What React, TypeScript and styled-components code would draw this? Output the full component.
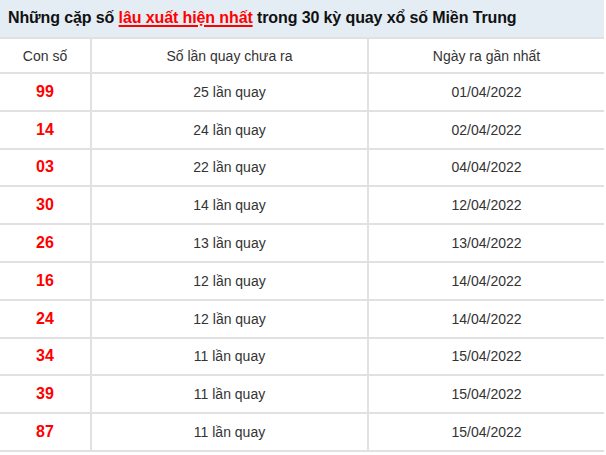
import React from "react";
import styled, { createGlobalStyle } from "styled-components";

const Global = createGlobalStyle`
  html, body { margin: 0; padding: 0; background: #fff; }
  body { font-family: "Liberation Sans", Arial, sans-serif; }
`;

const Wrap = styled.div`
  width: 604px;
`;

const TitleBar = styled.div`
  height: 37px;
  box-sizing: border-box;
  padding: 0 8px;
  background: #e4edf4;
  font-size: 16px;
  font-weight: bold;
  color: #111;
  line-height: 35px;
  letter-spacing: -0.11px;
  white-space: nowrap;
`;

const RedLink = styled.a`
  color: #ff0000;
  text-decoration: underline;
  text-decoration-thickness: 2px;
  text-underline-offset: 2px;
`;

const Table = styled.table`
  width: 604px;
  border-collapse: collapse;
  table-layout: fixed;
  border-top: 2px solid #e1e1e1;
`;

const Row = styled.tr<{ $head?: boolean }>`
  height: ${(p) => (p.$head ? "35px" : "37.8px")};
  border-bottom: 2px solid #e1e1e1;
`;

const Cell = styled.td<{ $w?: string }>`
  padding: 0;
  text-align: center;
  vertical-align: middle;
  font-size: 14px;
  color: #333;
  width: ${(p) => p.$w ?? "auto"};
  & + & {
    border-left: 2px solid #e1e1e1;
  }
`;

const Num = styled(Cell)`
  font-size: 16px;
  font-weight: bold;
  color: #ff0000;
`;

const rows: [string, number, string][] = [
  ["99", 25, "01/04/2022"],
  ["14", 24, "02/04/2022"],
  ["03", 22, "04/04/2022"],
  ["30", 14, "12/04/2022"],
  ["26", 13, "13/04/2022"],
  ["16", 12, "14/04/2022"],
  ["24", 12, "14/04/2022"],
  ["34", 11, "15/04/2022"],
  ["39", 11, "15/04/2022"],
  ["87", 11, "15/04/2022"],
];

export default function App() {
  return (
    <Wrap>
      <Global />
      <TitleBar>
        Những cặp số <RedLink>lâu xuất hiện nhất</RedLink> trong 30 kỳ quay xổ số Miền Trung
      </TitleBar>
      <Table>
        <tbody>
          <Row $head>
            <Cell $w="90px">Con số</Cell>
            <Cell $w="275px">Số lần quay chưa ra</Cell>
            <Cell>Ngày ra gần nhất</Cell>
          </Row>
          {rows.map(([n, c, d], i) => (
            <Row key={i}>
              <Num>{n}</Num>
              <Cell>{c} lần quay</Cell>
              <Cell>{d}</Cell>
            </Row>
          ))}
        </tbody>
      </Table>
    </Wrap>
  );
}
